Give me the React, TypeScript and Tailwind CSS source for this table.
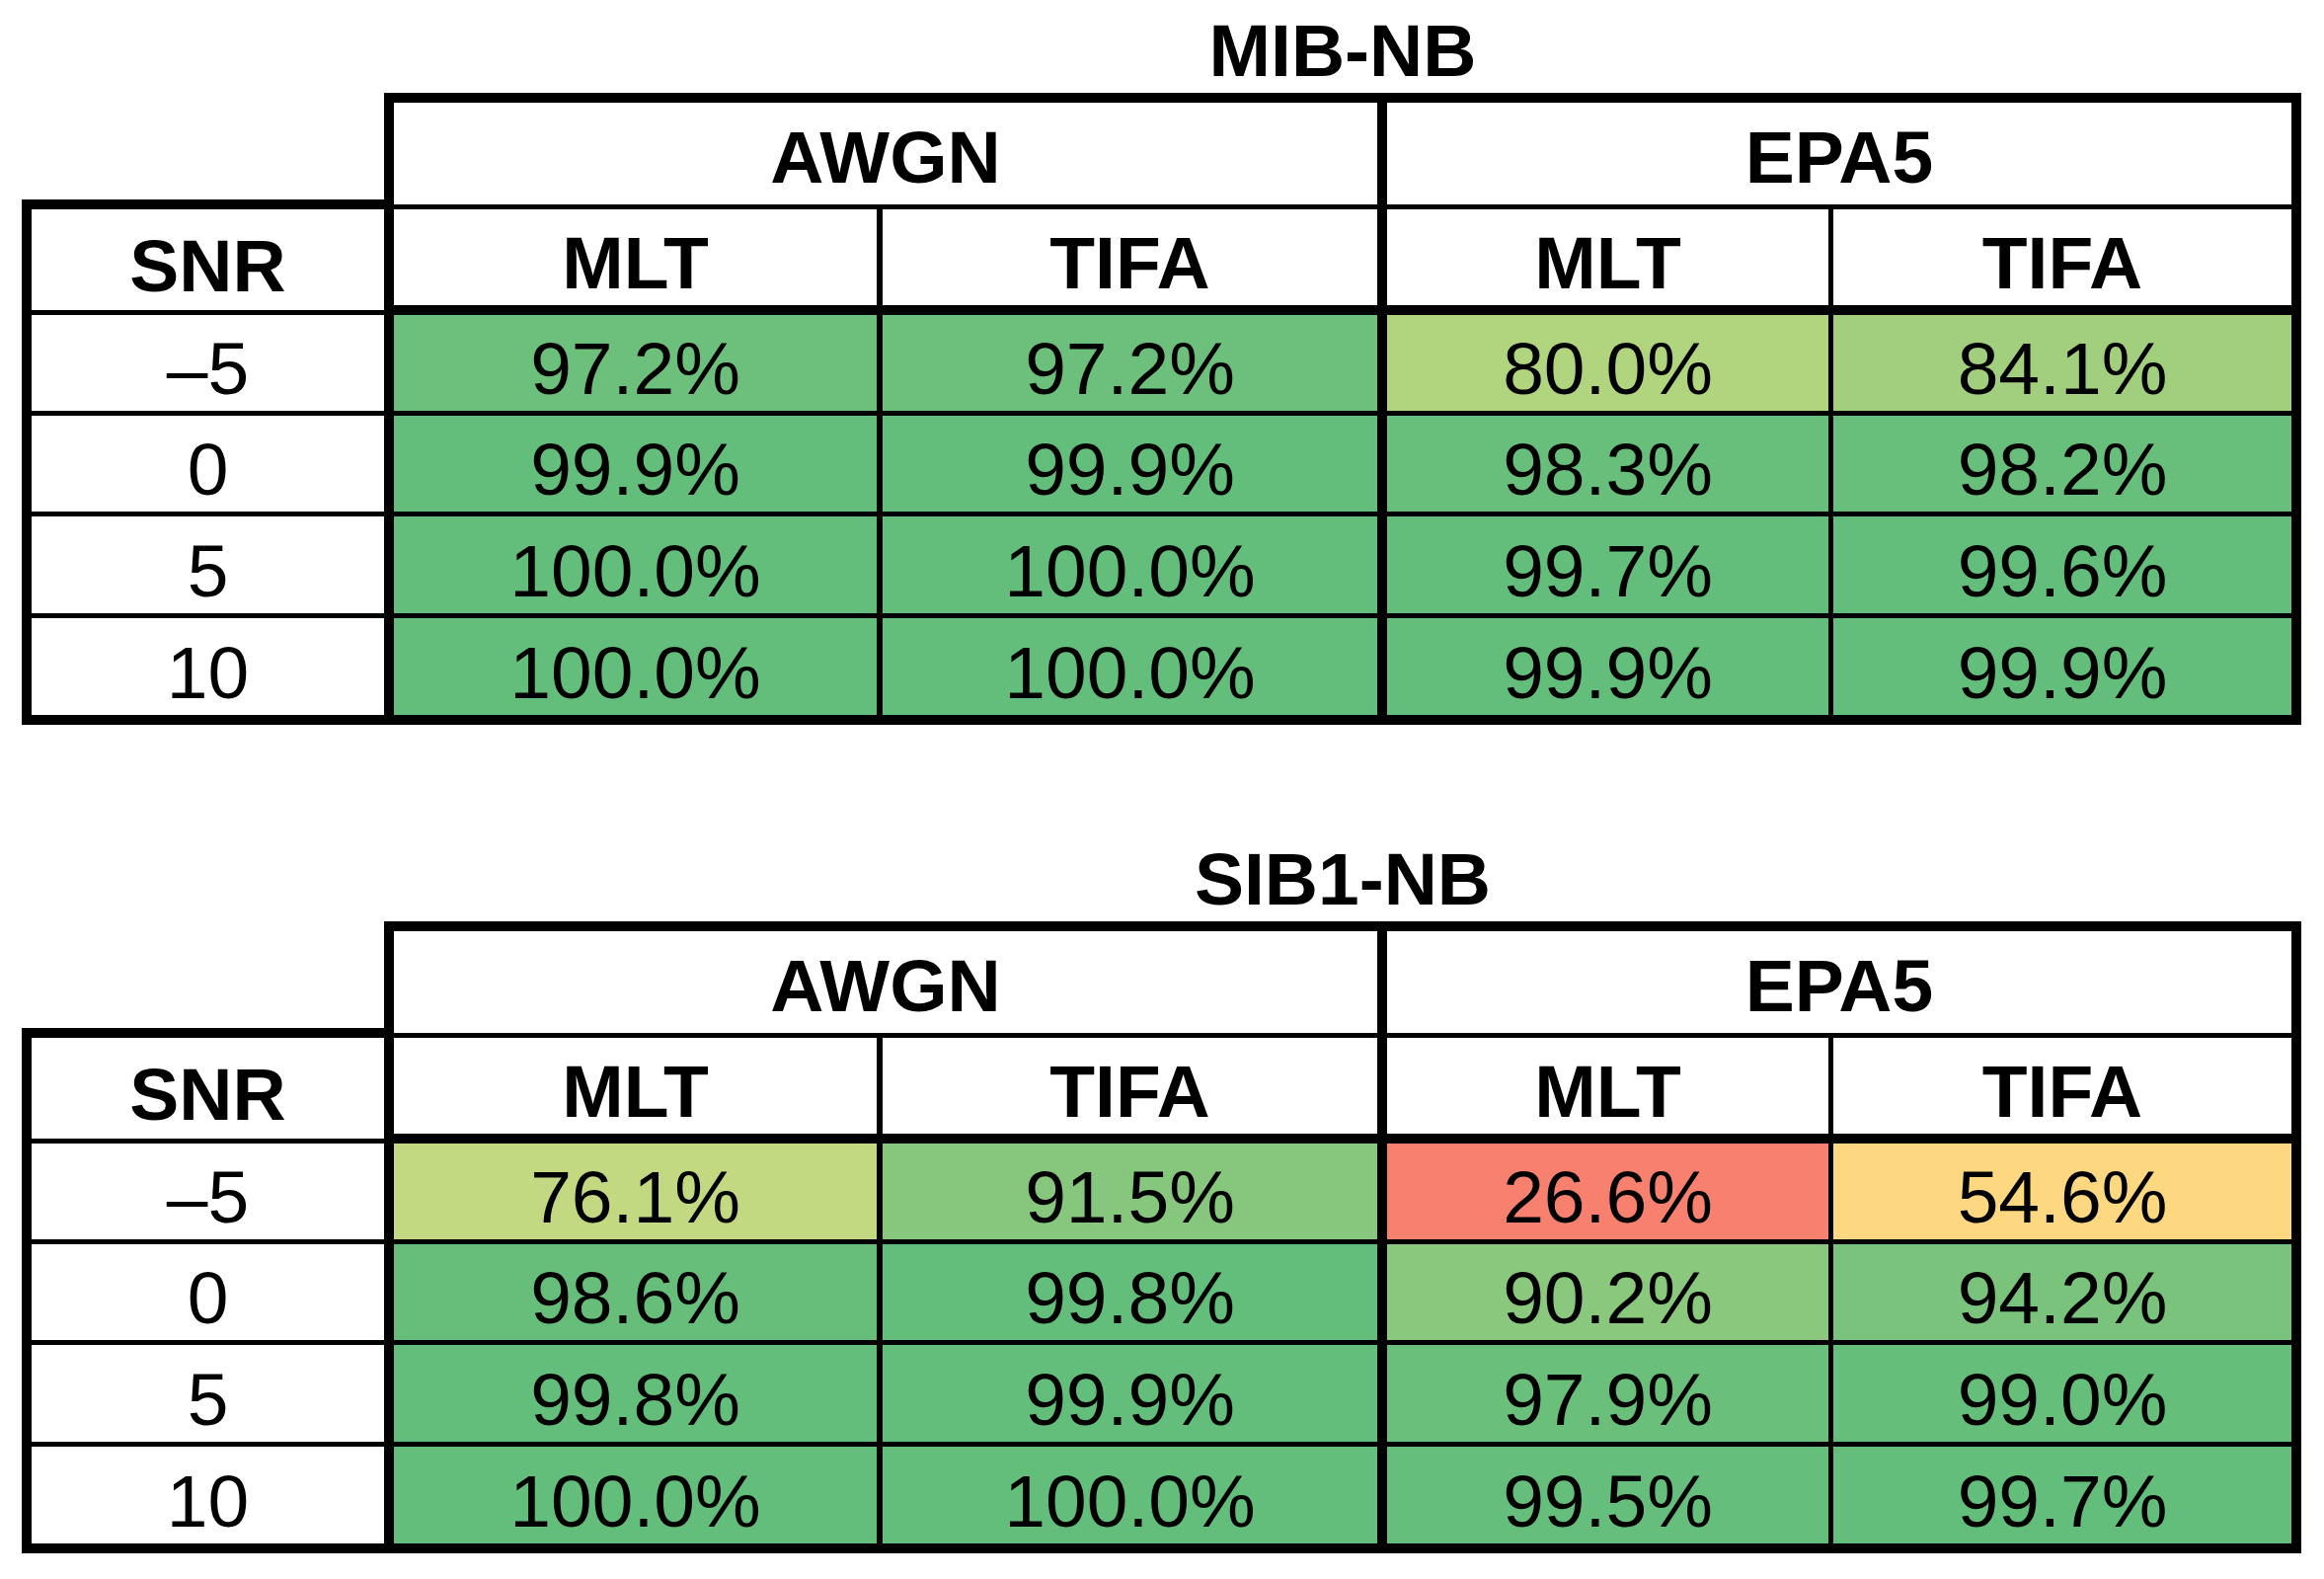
type Cell = { v: string; bg: string };
type Row = { snr: string; cells: Cell[] };

const MIB: Row[] = [
  {
    snr: "–5",
    cells: [
      { v: "97.2%", bg: "bg-[#6cc07c]" },
      { v: "97.2%", bg: "bg-[#6cc07c]" },
      { v: "80.0%", bg: "bg-[#b1d47f]" },
      { v: "84.1%", bg: "bg-[#a2cf7e]" },
    ],
  },
  {
    snr: "0",
    cells: [
      { v: "99.9%", bg: "bg-[#64be7b]" },
      { v: "99.9%", bg: "bg-[#64be7b]" },
      { v: "98.3%", bg: "bg-[#68bf7b]" },
      { v: "98.2%", bg: "bg-[#68bf7b]" },
    ],
  },
  {
    snr: "5",
    cells: [
      { v: "100.0%", bg: "bg-[#63be7b]" },
      { v: "100.0%", bg: "bg-[#63be7b]" },
      { v: "99.7%", bg: "bg-[#64be7b]" },
      { v: "99.6%", bg: "bg-[#64be7b]" },
    ],
  },
  {
    snr: "10",
    cells: [
      { v: "100.0%", bg: "bg-[#63be7b]" },
      { v: "100.0%", bg: "bg-[#63be7b]" },
      { v: "99.9%", bg: "bg-[#64be7b]" },
      { v: "99.9%", bg: "bg-[#64be7b]" },
    ],
  },
];

const SIB1: Row[] = [
  {
    snr: "–5",
    cells: [
      { v: "76.1%", bg: "bg-[#c2d981]" },
      { v: "91.5%", bg: "bg-[#86c67d]" },
      { v: "26.6%", bg: "bg-[#f8806f]" },
      { v: "54.6%", bg: "bg-[#fed880]" },
    ],
  },
  {
    snr: "0",
    cells: [
      { v: "98.6%", bg: "bg-[#67be7b]" },
      { v: "99.8%", bg: "bg-[#64be7b]" },
      { v: "90.2%", bg: "bg-[#8ac87d]" },
      { v: "94.2%", bg: "bg-[#7ac37c]" },
    ],
  },
  {
    snr: "5",
    cells: [
      { v: "99.8%", bg: "bg-[#64be7b]" },
      { v: "99.9%", bg: "bg-[#64be7b]" },
      { v: "97.9%", bg: "bg-[#6ac07b]" },
      { v: "99.0%", bg: "bg-[#66be7b]" },
    ],
  },
  {
    snr: "10",
    cells: [
      { v: "100.0%", bg: "bg-[#63be7b]" },
      { v: "100.0%", bg: "bg-[#63be7b]" },
      { v: "99.5%", bg: "bg-[#65be7b]" },
      { v: "99.7%", bg: "bg-[#64be7b]" },
    ],
  },
];

// left edge + width of each data column (snr column is separate)
const COLS = [
  "w-[499px] border-l-[10px]",
  "w-[507px] border-l-[6px]",
  "w-[457px] border-l-[10px]",
  "w-[479px] border-l-[5px] border-r-[10px]",
];

const ROW_H = ["h-[102px]", "h-[102px]", "h-[103px]", "h-[108px]"];

function ResultTable({ title, rows }: { title: string; rows: Row[] }) {
  return (
    <div>
      <div className="flex h-[86px]">
        <div className="w-[367px] shrink-0" />
        <div className="flex w-[1942px] justify-center text-[75px] font-bold leading-[86px] text-black">
          {title}
        </div>
      </div>

      {/* channel row */}
      <div className="flex h-[118px]">
        <div className="w-[367px] shrink-0 border-b-[10px] border-black" />
        <div className="flex w-[1006px] shrink-0 items-center justify-center border-t-[10px] border-b-[5px] border-l-[10px] border-black pt-[7px] text-[75px] font-bold">
          AWGN
        </div>
        <div className="flex w-[936px] shrink-0 items-center justify-center border-t-[10px] border-r-[10px] border-b-[5px] border-l-[10px] border-black pt-[7px] text-[75px] font-bold">
          EPA5
        </div>
      </div>

      {/* method row */}
      <div className="flex h-[107px]">
        <div className="flex w-[367px] shrink-0 items-center justify-center border-b-[5px] border-l-[10px] border-black pt-[12px] text-[75px] font-bold">
          SNR
        </div>
        {["MLT", "TIFA", "MLT", "TIFA"].map((m, i) => (
          <div
            key={i}
            className={`flex shrink-0 items-center justify-center border-b-[10px] border-black pt-[12px] text-[75px] font-bold ${COLS[i]}`}
          >
            {m}
          </div>
        ))}
      </div>

      {rows.map((r, ri) => {
        const last = ri === rows.length - 1;
        const b = last ? "border-b-[10px]" : "border-b-[5px]";
        return (
          <div key={r.snr} className={`flex ${ROW_H[ri]}`}>
            <div
              className={`flex w-[367px] shrink-0 items-center justify-center border-l-[10px] border-black bg-white pt-[12px] text-[75px] ${b}`}
            >
              {r.snr}
            </div>
            {r.cells.map((c, ci) => (
              <div
                key={ci}
                className={`flex shrink-0 items-center justify-center border-black pt-[12px] text-[75px] text-black ${COLS[ci]} ${c.bg} ${b}`}
              >
                {c.v}
              </div>
            ))}
          </div>
        );
      })}
    </div>
  );
}

export default function App() {
  return (
    <div className="min-h-[1599px] w-[2354px] bg-white pt-[8px] pl-[22px] font-['Liberation_Sans',Arial,sans-serif] text-black">
      <ResultTable title="MIB-NB" rows={MIB} />
      <div className="mt-[113px]">
        <ResultTable title="SIB1-NB" rows={SIB1} />
      </div>
    </div>
  );
}
